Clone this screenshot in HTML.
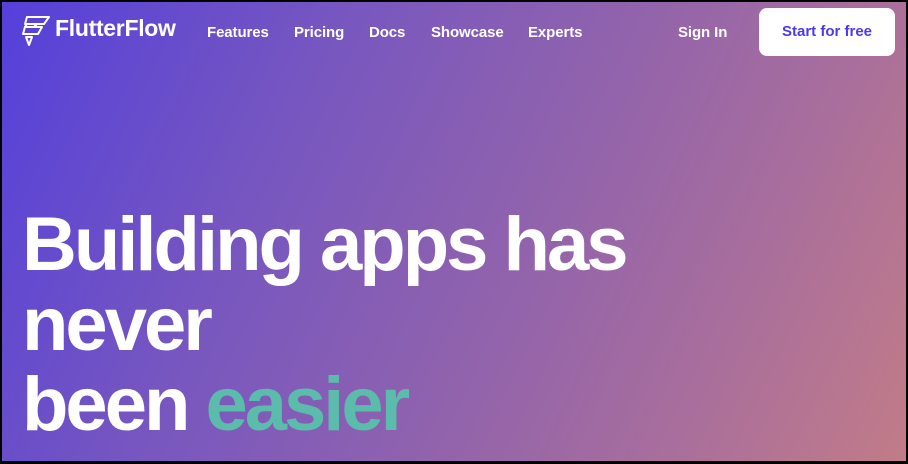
<!DOCTYPE html>
<html><head><meta charset="utf-8"><style>
html,body{margin:0;padding:0;}
body{width:908px;height:464px;overflow:hidden;background:#000;font-family:"Liberation Sans",sans-serif;}
.page{position:absolute;left:2px;top:2px;width:904px;height:459px;
background:linear-gradient(115deg,#5440db 0%,#7656c0 30%,#8f62ae 55%,#a86e9c 78%,#c27c88 100%);overflow:hidden;}
.nav a{position:absolute;color:#fff;font-size:15px;font-weight:bold;top:22px;text-decoration:none;letter-spacing:-0.1px}
.logo{position:absolute;left:20px;top:14px;}
.brand{position:absolute;left:53px;top:13px;color:#fff;font-size:23px;font-weight:bold;letter-spacing:-0.3px}
.btn{position:absolute;left:757px;top:6px;width:136px;height:48px;background:#fff;border-radius:8px;color:#4b39ef;font-size:15px;font-weight:bold;text-align:center;line-height:48px}
h1{position:absolute;left:20px;top:203px;margin:0;color:#fff;font-size:76px;line-height:80px;font-weight:bold;letter-spacing:-3px}
.g{color:#5bbcab}
</style></head><body><div class="page">
<svg class="logo" width="30" height="32" viewBox="0 0 30 32" fill="none" stroke="#fff" stroke-width="2" stroke-linejoin="round">
<path d="M5 1 H27 L22 8 H3 Z"/><path d="M3 11 H20 L16 18 H1 Z"/><path d="M4 21 L10 21 L7 29 Z"/><path d="M5 8 L3 11 M15 8 L12 11"/></svg>
<div class="brand">FlutterFlow</div>
<div class="nav">
<a style="left:205px">Features</a><a style="left:292px">Pricing</a><a style="left:367px">Docs</a><a style="left:429px">Showcase</a><a style="left:526px">Experts</a><a style="left:676px">Sign In</a>
</div>
<div class="btn">Start for free</div>
<h1>Building apps has<br>never<br>been <span class="g">easier</span></h1>
</div></body></html>
